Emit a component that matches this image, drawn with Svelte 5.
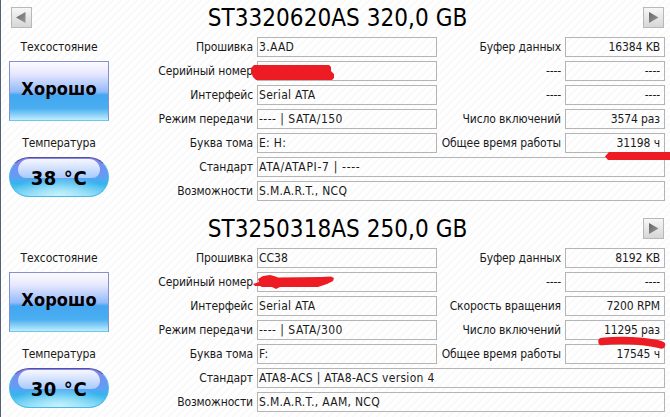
<script lang="ts">
  type Row = {
    label: string,
    value: string,
    tracking?: number,
    label2?: string,
    value2?: string
  }

  type Drive = {
    title: string,
    hasPrev: boolean,
    health: string,
    temperature: string,
    rows: Row[]
  }

  const drives: Drive[] = [
    {
      title: "ST3320620AS 320,0 GB",
      hasPrev: true,
      health: "Хорошо",
      temperature: "38 °C",
      rows: [
        { label: "Прошивка", value: "3.AAD", label2: "Буфер данных", value2: "16384 KB" },
        { label: "Серийный номер", value: "", label2: "----", value2: "----" },
        { label: "Интерфейс", value: "Serial ATA", label2: "----", value2: "----" },
        { label: "Режим передачи", value: "---- | SATA/150", tracking: 0.47, label2: "Число включений", value2: "3574 раз" },
        { label: "Буква тома", value: "E: H:", label2: "Общее время работы", value2: "31198 ч" },
        { label: "Стандарт", value: "ATA/ATAPI-7 | ----", tracking: 0.68 },
        { label: "Возможности", value: "S.M.A.R.T., NCQ" },
      ]
    },
    {
      title: "ST3250318AS 250,0 GB",
      hasPrev: false,
      health: "Хорошо",
      temperature: "30 °C",
      rows: [
        { label: "Прошивка", value: "CC38", tracking: 0, label2: "Буфер данных", value2: "8192 KB" },
        { label: "Серийный номер", value: "", label2: "----", value2: "----" },
        { label: "Интерфейс", value: "Serial ATA", label2: "Скорость вращения", value2: "7200 RPM" },
        { label: "Режим передачи", value: "---- | SATA/300", tracking: 0.47, label2: "Число включений", value2: "11295 раз" },
        { label: "Буква тома", value: "F:", label2: "Общее время работы", value2: "17545 ч" },
        { label: "Стандарт", value: "ATA8-ACS | ATA8-ACS version 4" },
        { label: "Возможности", value: "S.M.A.R.T., AAM, NCQ" },
      ]
    }
  ];
</script>

{#snippet arrow(points: string)}
  <button class="nav" aria-label="disk">
    <svg width="19" height="19" viewBox="0 0 19 19">
      <defs>
        <linearGradient id="arrow-fill" x1="0" y1="0" x2="1" y2="1">
          <stop offset="0" stop-color="#666" />
          <stop offset="1" stop-color="#999" />
        </linearGradient>
      </defs>
      <polygon {points} fill="url(#arrow-fill)" />
    </svg>
  </button>
{/snippet}

<div class="window">
  {#each drives as drive}
    <section class="drive">
      <header>
        {#if drive.hasPrev}
          {@render arrow("13.5,4 13.5,15 4,9.5")}
        {:else}
          <span class="nav-space"></span>
        {/if}
        <h1>{drive.title}</h1>
        {@render arrow("5,4 5,15 14.5,9.5")}
      </header>

      <div class="body">
        <div class="status">
          <div class="caption">Техсостояние</div>
          <div class="health">{drive.health}</div>
          <div class="caption second">Температура</div>
          <div class="temperature"><span>{drive.temperature}</span></div>
        </div>

        <div class="rows">
          {#each drive.rows as row}
            <div class="row" class:wide={!row.label2}>
              <div class="label">{row.label}</div>
              <div class="field" style="letter-spacing: {row.tracking ?? 0.3}px">{row.value}</div>
              {#if row.label2}
                <div class="label">{row.label2}</div>
                <div class="field right">{row.value2}</div>
              {/if}
            </div>
          {/each}
        </div>
      </div>
    </section>
  {/each}

  <!-- red marker strokes over the fields -->
  <svg class="marker" width="670" height="417" viewBox="0 0 670 417">
    <path d="M254 65H329L331 67V71L334 74V78L332 80H256L253 77L251 72V68Z" />
    <path d="M609 152H670V160H608L605 156.500Z" />
    <path d="M253 284L259 282L258 279L263 276L270 275L274 276L278 277.500L321 277L331 276.500L334 278L333 281L327 284L318 287H280L276 289L272 287H262L260 286H255Z" />
    <path class="line" d="M602 341.500C615 340 628 340 642 341.500S658 344 661.500 345" />
  </svg>
</div>

<style>
  :global(body) {
    margin: 0;
    overflow: hidden;
  }

  .window {
    position: relative;
    box-sizing: border-box;
    width: 670px;
    height: 417px;
    overflow: hidden;
    border-left: 1px solid #526078;
    background: repeating-linear-gradient(135deg, #f7f7f7 0 0.5px, #fefefe 1px 5.2px, #f7f7f7 5.657px);
    color: #1a1a1a;
    font: 12px/20px "DejaVu Sans Condensed", "DejaVu Sans", sans-serif;
    font-stretch: condensed;
  }

  .drive {
    height: 211px;
  }

  header {
    display: flex;
    justify-content: space-between;
    box-sizing: border-box;
    height: 37px;
    padding: 7px 6px 0 10px;
  }

  h1 {
    margin: -6px 0 0;
    color: #000;
    font-size: 24px;
    line-height: 35px;
    font-weight: normal;
    letter-spacing: 0.05px;
    white-space: nowrap;
  }

  .nav {
    width: 21px;
    height: 21px;
    padding: 0;
    border: 1px solid #b8b8b8;
    background: linear-gradient(#f7f7f7, #d6d6d6);
  }

  .nav svg {
    display: block;
  }

  .nav-space {
    width: 21px;
  }

  .body {
    display: flex;
  }

  .status {
    width: 100px;
    margin-left: 8px;
  }

  .caption {
    height: 24px;
    text-align: center;
    letter-spacing: -0.1px;
  }

  .second {
    margin-top: 12px;
  }

  .health {
    box-sizing: border-box;
    height: 60px;
    border: 1px solid #8790cf;
    border-bottom-color: #6cc9ee;
    background: linear-gradient(#fcfbff 0%, #e8e8ff 20%, #93bbf9 51%, #43a6f1 57%, #4aaef1 80%, #c0edfc 100%);
    color: #000;
    font-size: 18px;
    line-height: 53px;
    font-weight: bold;
    letter-spacing: 0.1px;
    text-align: center;
  }

  .temperature {
    position: relative;
    box-sizing: border-box;
    height: 40px;
    border: 1px solid #4bb9e8;
    border-top-color: #5350a0;
    border-radius: 20px;
    background:
      radial-gradient(ellipse 50px 20px at 50% 100%, #c9f2fc, transparent),
      linear-gradient(#8583ee 0%, #679af5 45%, #35b5ee 68%, #7bd6f5 100%);
    color: #000;
    font-size: 20px;
    line-height: 40px;
    font-weight: bold;
    letter-spacing: 0.6px;
    text-align: center;
  }

  .temperature::before {
    content: "";
    position: absolute;
    left: 8px;
    right: 8px;
    top: 1px;
    height: 19px;
    border-radius: 14px 14px 10px 10px;
    background: linear-gradient(#f8f7ff, #a9cafc);
  }

  .temperature span {
    position: relative;
  }

  .rows {
    display: flex;
    flex-direction: column;
    gap: 4px;
    margin-left: 37px;
  }

  .row {
    display: grid;
    grid-template-columns: 111px 180px 128px 100px;
    height: 20px;
  }

  .row.wide {
    grid-template-columns: 111px 408px;
  }

  .label {
    padding-right: 4px;
    text-align: right;
    letter-spacing: -0.12px;
    white-space: nowrap;
  }

  .field {
    box-sizing: border-box;
    padding: 0 1px;
    border: 1px solid #b4b4b4;
    line-height: 18px;
    white-space: nowrap;
  }

  .right {
    padding-right: 4px;
    text-align: right;
    letter-spacing: -0.1px;
  }

  .marker {
    position: absolute;
    left: -1px;
    top: 0;
    fill: #ed1c24;
    pointer-events: none;
  }

  .marker .line {
    fill: none;
    stroke: #ed1c24;
    stroke-width: 7.5px;
    stroke-linecap: round;
  }
</style>
